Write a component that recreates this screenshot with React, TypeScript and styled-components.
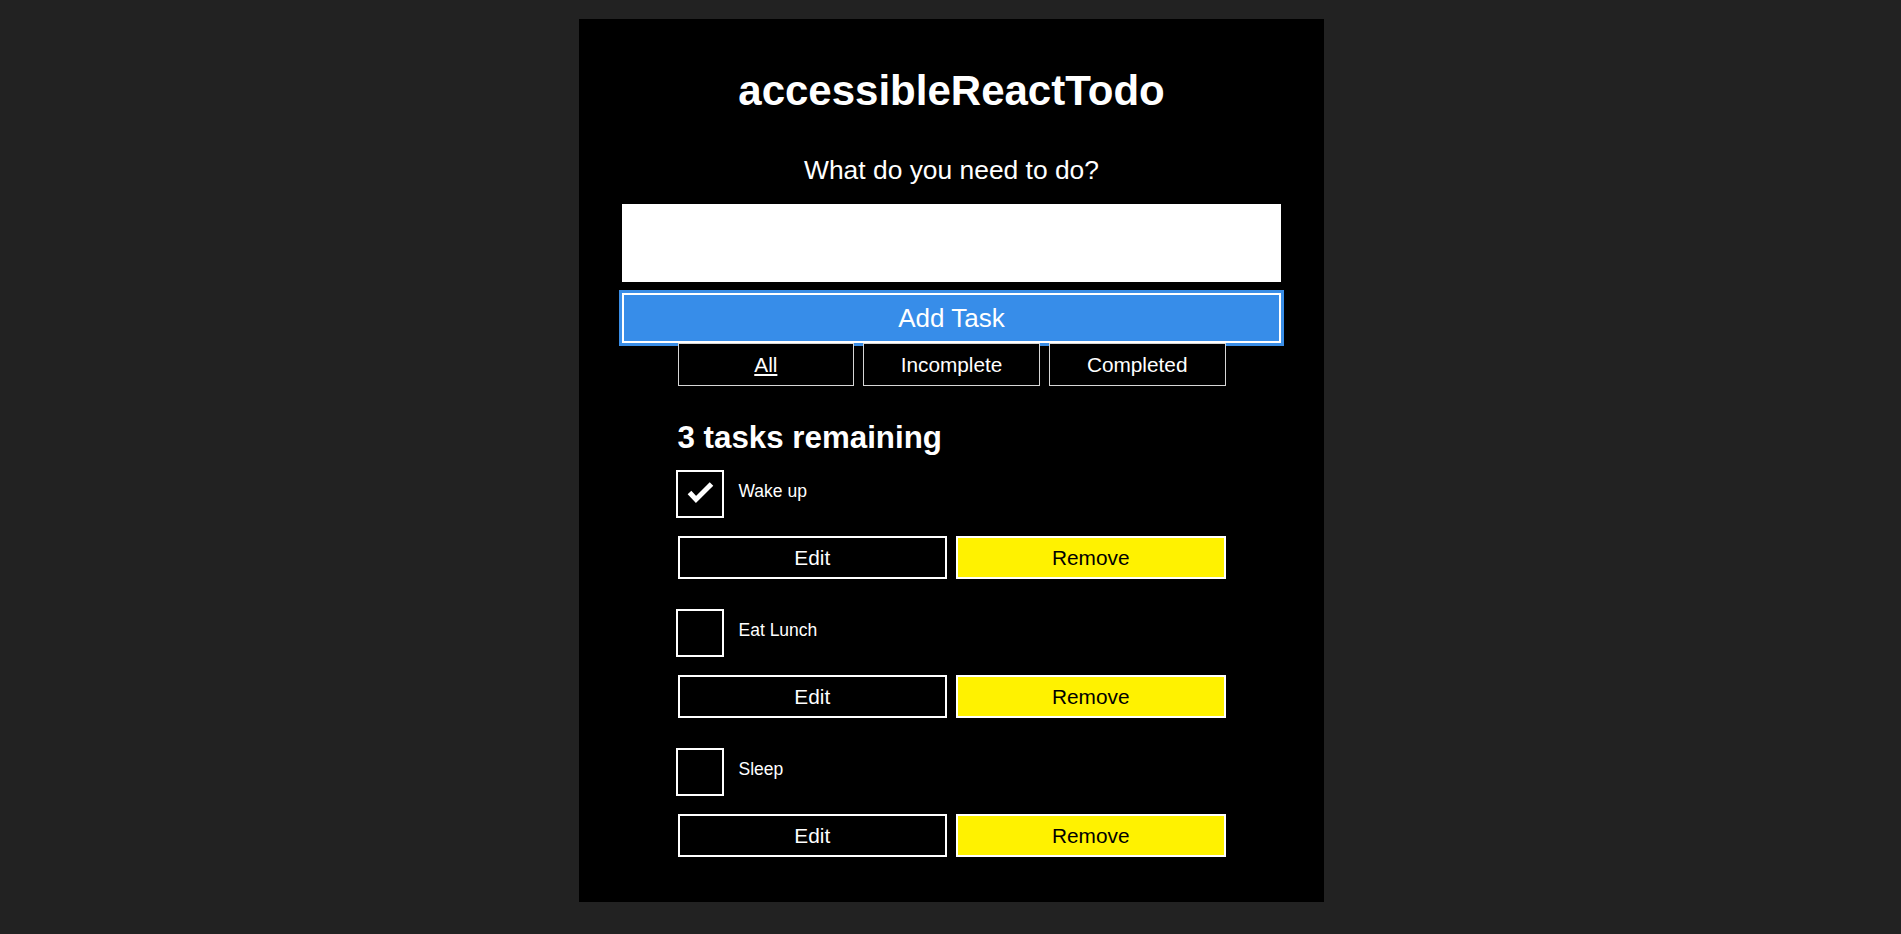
import React, { useState } from 'react';
import styled, { createGlobalStyle } from 'styled-components';

type Filter = 'All' | 'Incomplete' | 'Completed';

interface Task {
  id: string;
  name: string;
  completed: boolean;
}

const GlobalStyle = createGlobalStyle`
  html, body {
    margin: 0;
    padding: 0;
    background: #222222;
  }
  body {
    font-family: "Liberation Sans", Arial, sans-serif;
  }
`;

const Page = styled.div`
  padding: 19px 0 32px 2px;
`;

const TodoApp = styled.div`
  box-sizing: border-box;
  width: 745px;
  margin: 0 auto;
  padding: 43px 43px 45px;
  background: #000000;
  color: #ffffff;
`;

const Title = styled.h1`
  margin: 3px 0 0;
  font-size: 42px;
  line-height: 51px;
  font-weight: 700;
  text-align: center;
`;

const Form = styled.form`
  display: flex;
  flex-direction: column;
`;

const PromptLabel = styled.label`
  display: block;
  margin-top: 37px;
  font-size: 26.4px;
  line-height: 34px;
  text-align: center;
`;

const TaskInput = styled.input`
  box-sizing: border-box;
  width: 100%;
  height: 78px;
  margin-top: 17px;
  padding: 0 20px;
  border: none;
  background: #ffffff;
  font-family: inherit;
  font-size: 26px;
  outline: none;
`;

const AddButton = styled.button`
  box-sizing: border-box;
  width: 100%;
  height: 50px;
  margin-top: 11px;
  border: 2px solid #ffffff;
  outline: 3px solid #3a8ee7;
  background: #378de9;
  color: #ffffff;
  font-family: inherit;
  font-size: 26px;
  cursor: pointer;
`;

const Filters = styled.div`
  display: flex;
  gap: 9px;
  width: 548px;
  margin: 0 auto;
`;

const FilterButton = styled.button<{ $active?: boolean }>`
  flex: 1;
  box-sizing: border-box;
  height: 43px;
  padding: 0;
  border: 1px solid #d6d6d6;
  background: #000000;
  color: #ffffff;
  font-family: inherit;
  font-size: 20.8px;
  text-decoration: ${p => (p.$active ? 'underline' : 'none')};
  cursor: pointer;
`;

const ListSection = styled.section`
  width: 548px;
  margin: 0 auto;
`;

const Remaining = styled.h2`
  margin: 33px 0 0;
  font-size: 31.3px;
  line-height: 38px;
  font-weight: 700;
`;

const TaskList = styled.ul`
  display: flex;
  flex-direction: column;
  gap: 30px;
  margin: 13px 0 0;
  padding: 0;
  list-style: none;
`;

const TaskItem = styled.li`
  display: flex;
  flex-direction: column;
  gap: 18px;
`;

const CheckRow = styled.label`
  display: flex;
  align-items: flex-start;
  gap: 15px;
  cursor: pointer;
`;

const HiddenInput = styled.input`
  position: absolute;
  width: 1px;
  height: 1px;
  margin: 0;
  opacity: 0;
  overflow: hidden;
`;

const CheckBox = styled.span`
  box-sizing: border-box;
  flex: none;
  width: 48px;
  height: 48px;
  margin-left: -2px;
  border: 2px solid #ffffff;
  svg {
    display: block;
  }
`;

const TaskName = styled.span`
  margin-top: 10px;
  font-size: 17.5px;
  line-height: 22px;
`;

const ButtonGroup = styled.div`
  display: flex;
  gap: 9px;
`;

const ActionButton = styled.button<{ $danger?: boolean }>`
  flex: 1;
  box-sizing: border-box;
  height: 43px;
  padding: 0;
  border: 2px solid #ffffff;
  background: ${p => (p.$danger ? '#fff200' : '#000000')};
  color: ${p => (p.$danger ? '#000000' : '#ffffff')};
  font-family: inherit;
  font-size: 20.8px;
  cursor: pointer;
`;

const initialTasks: Task[] = [
  { id: 'todo-0', name: 'Wake up', completed: true },
  { id: 'todo-1', name: 'Eat Lunch', completed: false },
  { id: 'todo-2', name: 'Sleep', completed: false },
];

const filters: Filter[] = ['All', 'Incomplete', 'Completed'];

export default function App() {
  const [tasks, setTasks] = useState<Task[]>(initialTasks);
  const [filter, setFilter] = useState<Filter>('All');
  const [name, setName] = useState('');

  const toggle = (id: string) => {
    setTasks(tasks.map(t => (t.id === id ? { ...t, completed: !t.completed } : t)));
  };

  const remove = (id: string) => {
    setTasks(tasks.filter(t => t.id !== id));
  };

  const onSubmit = (e: React.FormEvent) => {
    e.preventDefault();
    if (!name.trim()) return;
    setTasks([...tasks, { id: `todo-${Date.now()}`, name, completed: false }]);
    setName('');
  };

  const shown = tasks.filter(t =>
    filter === 'All' ? true : filter === 'Completed' ? t.completed : !t.completed
  );

  // keeps the original wording, counts every task in the list
  const heading = `${tasks.length} ${tasks.length === 1 ? 'task' : 'tasks'} remaining`;

  return (
    <>
      <GlobalStyle />
      <Page>
        <TodoApp>
          <Title>accessibleReactTodo</Title>
          <Form onSubmit={onSubmit}>
            <PromptLabel htmlFor="new-todo-input">What do you need to do?</PromptLabel>
            <TaskInput
              id="new-todo-input"
              type="text"
              autoComplete="off"
              value={name}
              onChange={e => setName(e.target.value)}
            />
            <AddButton type="submit">Add Task</AddButton>
          </Form>
          <Filters>
            {filters.map(f => (
              <FilterButton
                key={f}
                type="button"
                $active={filter === f}
                aria-pressed={filter === f}
                onClick={() => setFilter(f)}
              >
                {f}
              </FilterButton>
            ))}
          </Filters>
          <ListSection>
            <Remaining>{heading}</Remaining>
            <TaskList>
              {shown.map(task => (
                <TaskItem key={task.id}>
                  <CheckRow>
                    <HiddenInput
                      type="checkbox"
                      checked={task.completed}
                      onChange={() => toggle(task.id)}
                    />
                    <CheckBox>
                      {task.completed && (
                        <svg width="44" height="44" viewBox="2 2 44 44">
                          <polyline
                            points="13.5,22.5 20,29.5 35.5,14"
                            fill="none"
                            stroke="#ffffff"
                            strokeWidth="5"
                            strokeLinejoin="miter"
                          />
                        </svg>
                      )}
                    </CheckBox>
                    <TaskName>{task.name}</TaskName>
                  </CheckRow>
                  <ButtonGroup>
                    <ActionButton type="button">Edit</ActionButton>
                    <ActionButton type="button" $danger onClick={() => remove(task.id)}>
                      Remove
                    </ActionButton>
                  </ButtonGroup>
                </TaskItem>
              ))}
            </TaskList>
          </ListSection>
        </TodoApp>
      </Page>
    </>
  );
}
